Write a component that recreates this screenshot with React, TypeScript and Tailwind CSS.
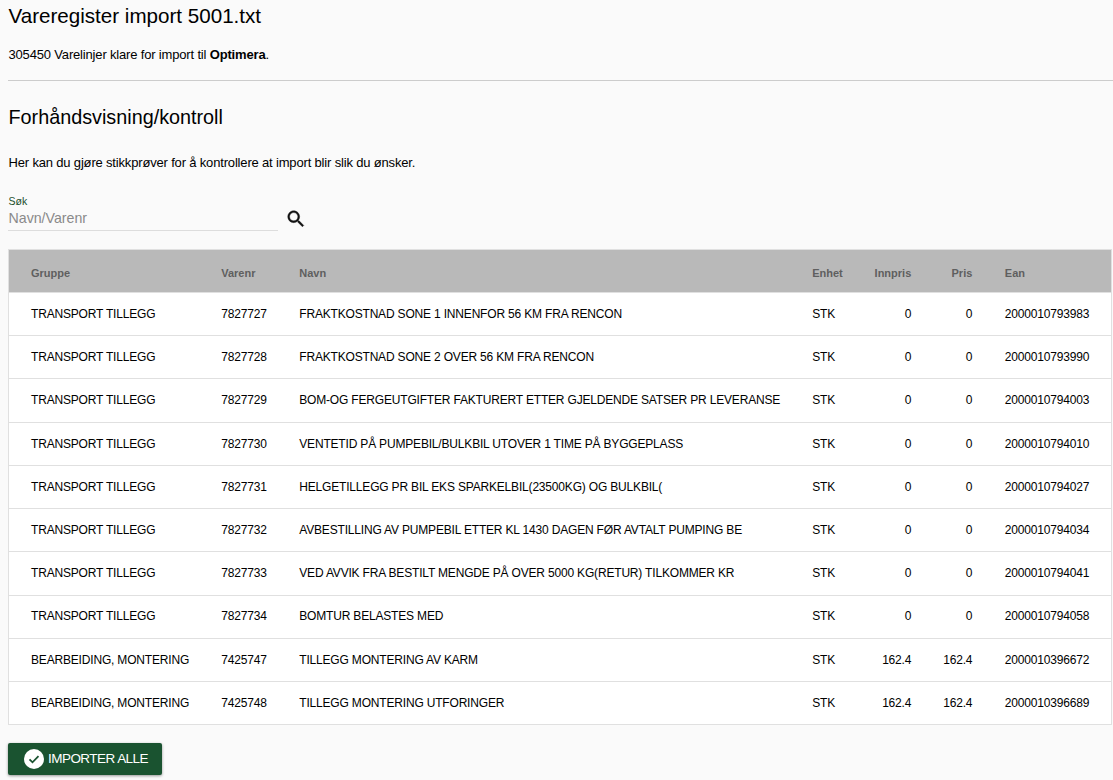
import React from "react";

const rows = [
  ["TRANSPORT TILLEGG", "7827727", "FRAKTKOSTNAD SONE 1 INNENFOR 56 KM FRA RENCON", "STK", "0", "0", "2000010793983"],
  ["TRANSPORT TILLEGG", "7827728", "FRAKTKOSTNAD SONE 2 OVER 56 KM FRA RENCON", "STK", "0", "0", "2000010793990"],
  ["TRANSPORT TILLEGG", "7827729", "BOM-OG FERGEUTGIFTER FAKTURERT ETTER GJELDENDE SATSER PR LEVERANSE", "STK", "0", "0", "2000010794003"],
  ["TRANSPORT TILLEGG", "7827730", "VENTETID PÅ PUMPEBIL/BULKBIL UTOVER 1 TIME PÅ BYGGEPLASS", "STK", "0", "0", "2000010794010"],
  ["TRANSPORT TILLEGG", "7827731", "HELGETILLEGG PR BIL EKS SPARKELBIL(23500KG) OG BULKBIL(", "STK", "0", "0", "2000010794027"],
  ["TRANSPORT TILLEGG", "7827732", "AVBESTILLING AV PUMPEBIL ETTER KL 1430 DAGEN FØR AVTALT PUMPING BE", "STK", "0", "0", "2000010794034"],
  ["TRANSPORT TILLEGG", "7827733", "VED AVVIK FRA BESTILT MENGDE PÅ OVER 5000 KG(RETUR) TILKOMMER KR", "STK", "0", "0", "2000010794041"],
  ["TRANSPORT TILLEGG", "7827734", "BOMTUR BELASTES MED", "STK", "0", "0", "2000010794058"],
  ["BEARBEIDING, MONTERING", "7425747", "TILLEGG MONTERING AV KARM", "STK", "162.4", "162.4", "2000010396672"],
  ["BEARBEIDING, MONTERING", "7425748", "TILLEGG MONTERING UTFORINGER", "STK", "162.4", "162.4", "2000010396689"],
];

const headers = ["Gruppe", "Varenr", "Navn", "Enhet", "Innpris", "Pris", "Ean"];

function cellClass(i: number) {
  if (i === 0) return "pl-[22px]";
  if (i === 4 || i === 5) return "text-right";
  if (i === 6) return "pl-[32.5px]";
  return "";
}

export default function App() {
  return (
    <div className="min-h-[780px] bg-[#fafafa] text-black font-['Liberation_Sans',Arial,sans-serif] overflow-hidden pt-[2px]">
      <div className="pl-2 pr-0">
        <h1 className="text-[20.6px] leading-[28px] font-normal pl-[0.5px]">Vareregister import 5001.txt</h1>
        <p className="text-[13px] tracking-[-0.17px] leading-[18px] mt-[16px] pl-[0.5px]">
          305450 Varelinjer klare for import til <b>Optimera</b>.
        </p>
        <hr className="border-0 border-t border-[#cccccc] mt-[16px]" />
        <h2 className="text-[19.8px] leading-[28px] font-normal mt-[22px] pl-[0.5px]">Forhåndsvisning/kontroll</h2>
        <p className="text-[13px] tracking-[-0.17px] leading-[18px] mt-[23px] pl-[0.5px]">
          Her kan du gjøre stikkprøver for å kontrollere at import blir slik du ønsker.
        </p>
        <div className="flex items-end mt-[23px]">
          <div className="w-[270px] border-b border-[#dddddd] pb-[3px]">
            <div className="text-[10.5px] leading-[12px] text-[#1b4f2b] pl-[0.5px]">Søk</div>
            <div className="text-[14.2px] leading-[18px] mt-[2px] text-[#8a8a8a] pl-[0.5px]">Navn/Varenr</div>
          </div>
          <svg className="ml-[7px] mb-[1px]" width="22" height="22" viewBox="0 0 24 24" fill="#111" stroke="#111" strokeWidth="0.4">
            <path d="M15.5 14h-.79l-.28-.27C15.41 12.59 16 11.11 16 9.5 16 5.91 13.09 3 9.5 3S3 5.91 3 9.5 5.91 16 9.5 16c1.61 0 3.09-.59 4.23-1.57l.27.28v.79l5 4.99L20.49 19l-4.99-5zm-6 0C7.01 14 5 11.99 5 9.5S7.01 5 9.5 5 14 7.01 14 9.5 11.99 14 9.5 14z" />
          </svg>
        </div>
        <table className="table-fixed border-collapse w-[1104px] mt-[18px] border border-[#e0e0e0] bg-white text-[12px] tracking-[-0.18px]">
          <colgroup>
            <col className="w-[212.5px]" />
            <col className="w-[78px]" />
            <col className="w-[512.5px]" />
            <col className="w-[48px]" />
            <col className="w-[51px]" />
            <col className="w-[61px]" />
            <col className="w-[139px]" />
          </colgroup>
          <thead>
            <tr className="bg-[#b9b9b9] h-[43px]">
              {headers.map((h, i) => (
                <th key={h} className={"font-bold text-[11px] tracking-normal text-[#5f5f5f] text-left p-0 pt-[4px] " + cellClass(i)}>
                  {h}
                </th>
              ))}
            </tr>
          </thead>
          <tbody>
            {rows.map((r) => (
              <tr key={r[1]} className="h-[43.23px] border-t border-[#e0e0e0]">
                {r.map((c, i) => (
                  <td key={i} className={"p-0 pb-[0.4px] whitespace-nowrap " + cellClass(i)}>
                    {c}
                  </td>
                ))}
              </tr>
            ))}
          </tbody>
        </table>
        <button className="mt-[18px] flex items-center h-[32px] w-[154px] pl-[16px] rounded-[2px] bg-[#1a5330] text-white text-[13.5px] tracking-[-0.54px] shadow-[0_1px_3px_rgba(0,0,0,0.4)]">
          <svg width="20" height="20" viewBox="0 0 20 20" className="mr-[4px]">
            <circle cx="10" cy="10" r="10" fill="#fff" />
            <path d="M5.5 10.3l3 3 6-6.2" fill="none" stroke="#1a5330" strokeWidth="1.8" />
          </svg>
          IMPORTER ALLE
        </button>
      </div>
    </div>
  );
}
